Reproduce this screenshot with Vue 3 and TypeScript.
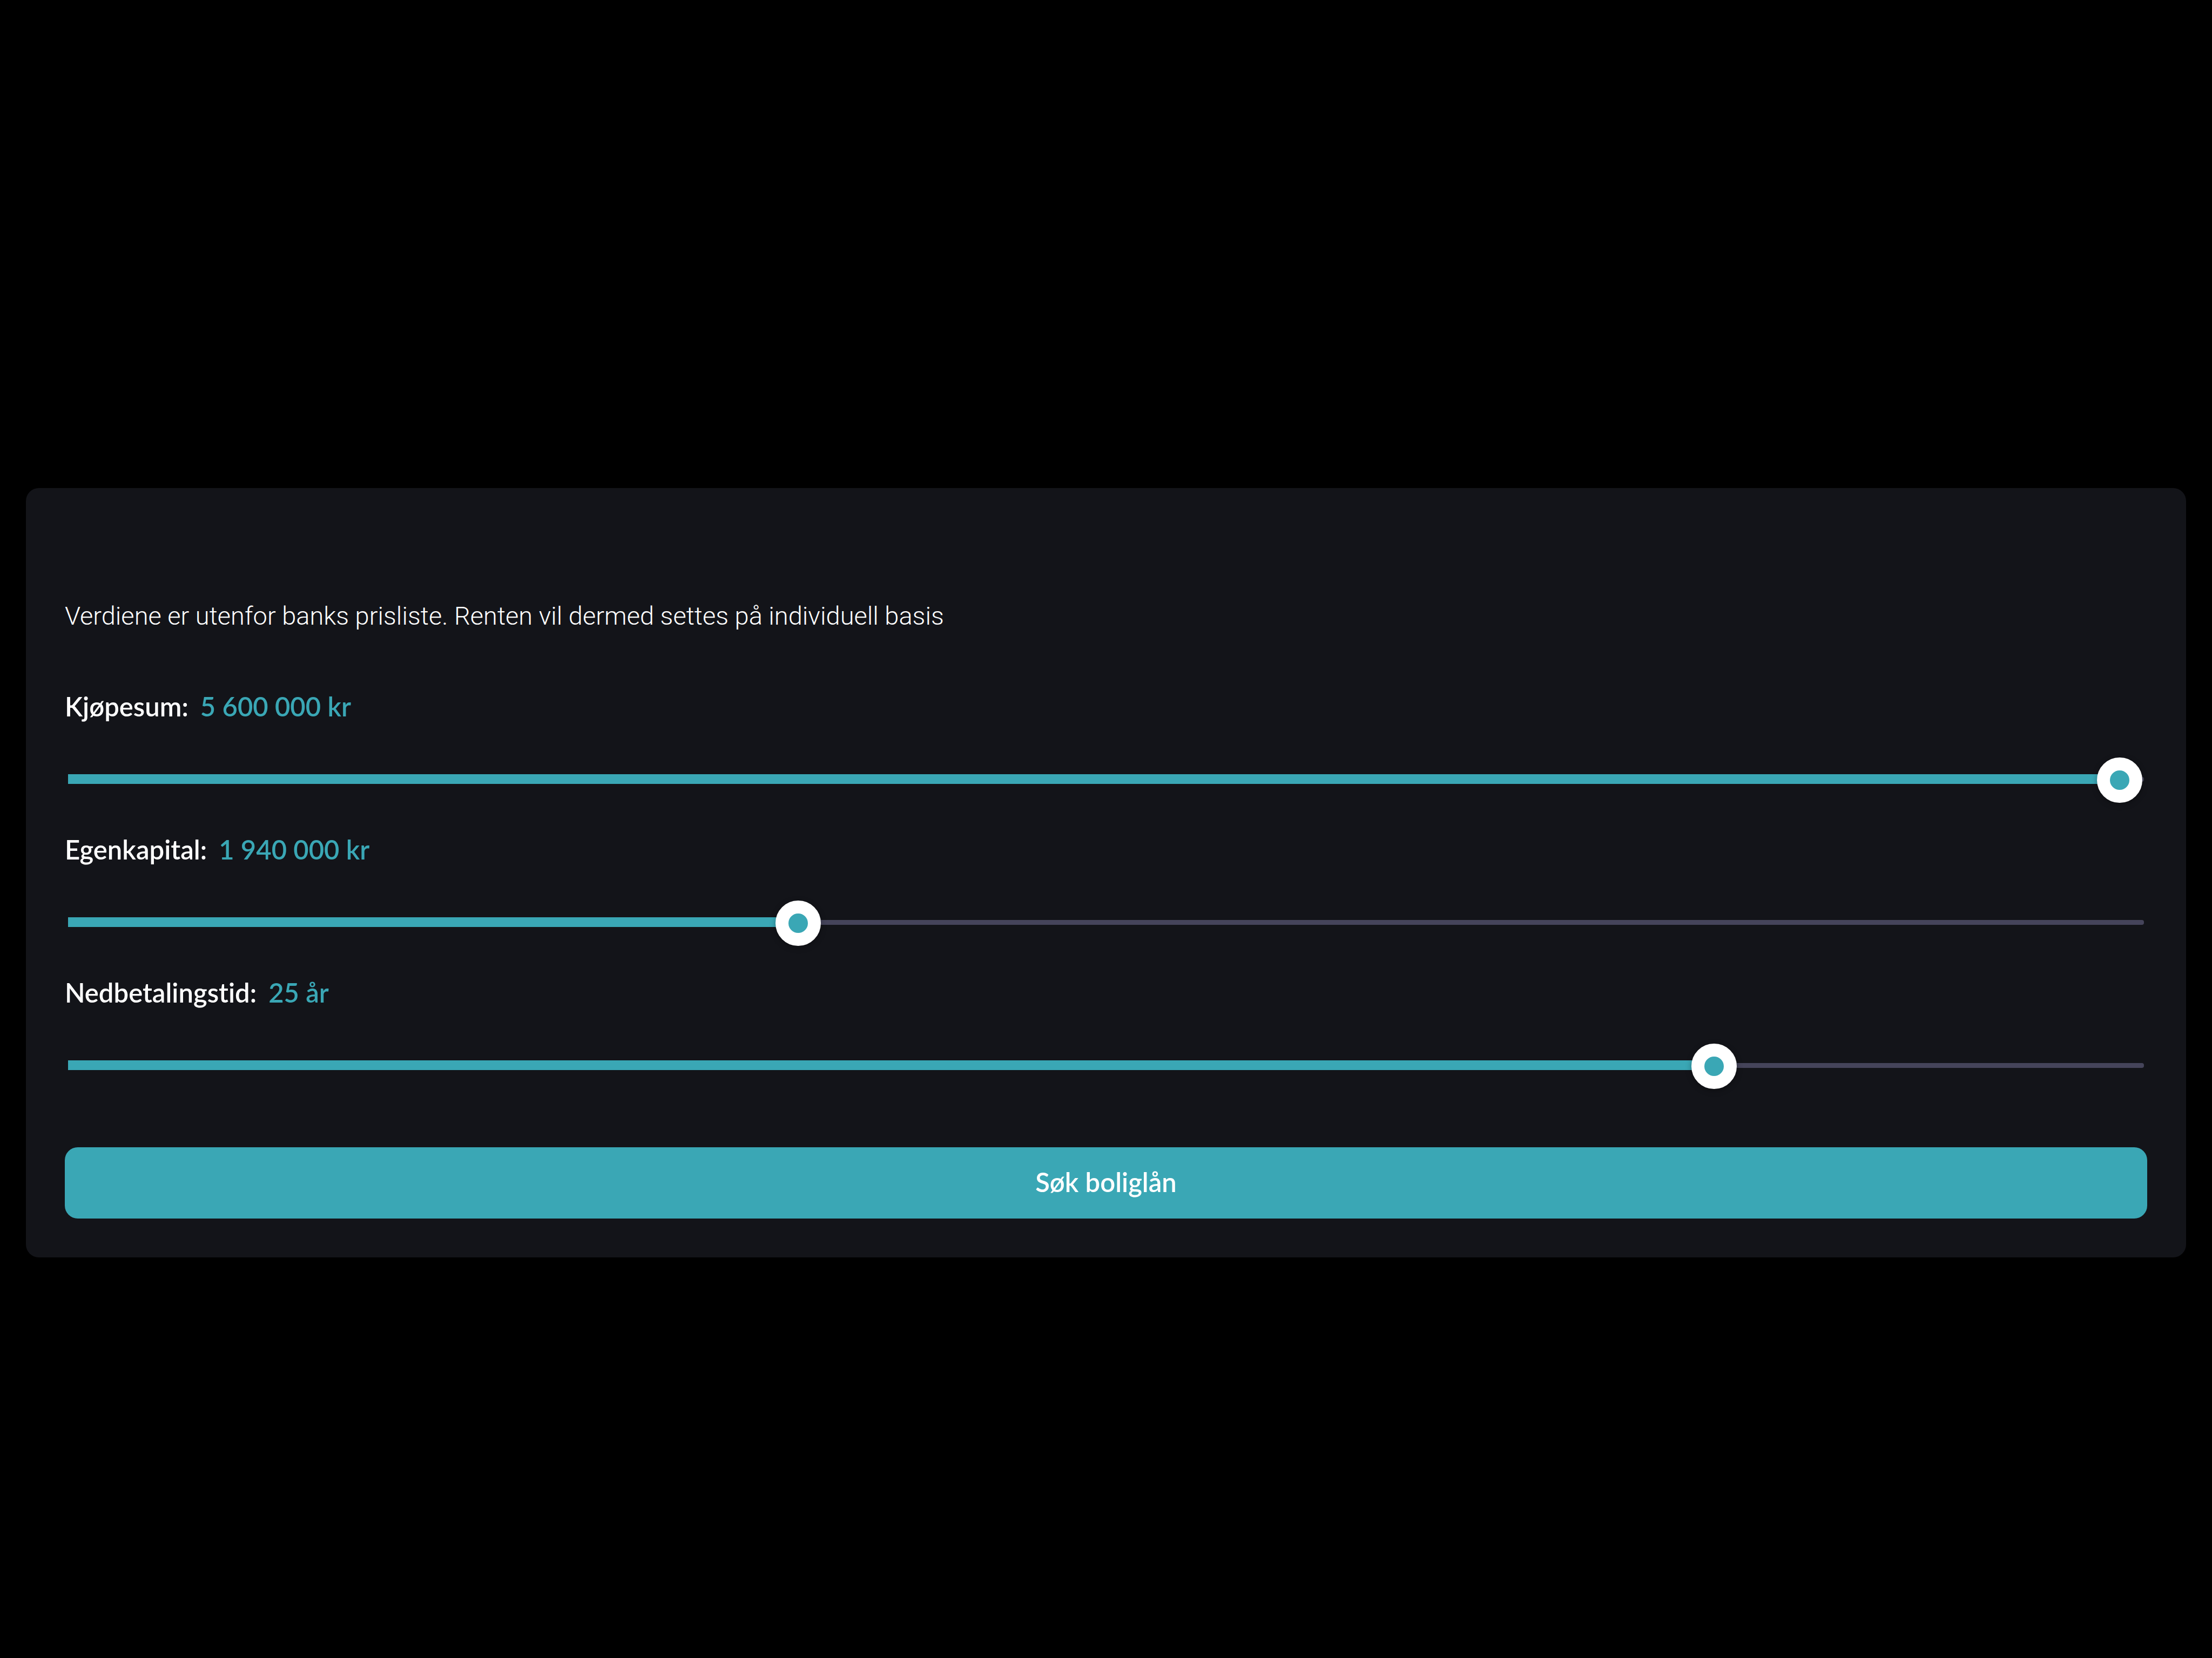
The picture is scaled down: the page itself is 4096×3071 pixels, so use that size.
<script setup lang="ts">
import { computed, reactive } from 'vue'

interface LoanField {
  id: string
  label: string
  unit: string
  min: number
  max: number
  step: number
  value: number
}

const fields = reactive<LoanField[]>([
  { id: 'kjopesum', label: 'Kjøpesum:', unit: 'kr', min: 0, max: 5600000, step: 10000, value: 5600000 },
  { id: 'egenkapital', label: 'Egenkapital:', unit: 'kr', min: 0, max: 5570000, step: 10000, value: 1940000 },
  { id: 'nedbetalingstid', label: 'Nedbetalingstid:', unit: 'år', min: 5, max: 30, step: 1, value: 25 },
])

const rows = computed(() =>
  fields.map((field) => ({
    field,
    text: `${String(field.value).replace(/\B(?=(\d{3})+$)/g, '\u00a0')} ${field.unit}`,
    fill: `${((field.value - field.min) / (field.max - field.min)) * 100}%`,
  })),
)
</script>

<template>
  <main class="page">
    <form class="card" @submit.prevent>
      <p class="notice">Verdiene er utenfor banks prisliste. Renten vil dermed settes på individuell basis</p>

      <div v-for="row in rows" :key="row.field.id" class="field">
        <div class="caption">
          <label :for="row.field.id">{{ row.field.label }}</label>
          <output :for="row.field.id">{{ row.text }}</output>
        </div>
        <div class="slider">
          <span class="rail"></span>
          <span class="progress"><span class="fill" :style="{ width: row.fill }"></span></span>
          <input
            :id="row.field.id"
            v-model.number="row.field.value"
            type="range"
            :min="row.field.min"
            :max="row.field.max"
            :step="row.field.step"
          />
        </div>
      </div>

      <button type="submit" class="submit">Søk boliglån</button>
    </form>
  </main>
</template>

<style>
body {
  margin: 0;
  background: #000;
}
</style>

<style scoped>
.page {
  box-sizing: border-box;
  min-height: 100vh;
  padding: 904px 48px 48px;
  background: #000;
  color: #fff;
  font-family: Lato, 'Open Sans', sans-serif;
  font-size: 49px;
  font-weight: 600;
  font-variant-ligatures: none;
  line-height: 72px;
}

.card {
  display: flex;
  flex-direction: column;
  padding: 201px 72px 72px;
  border-radius: 24px;
  background: #131419;
}

.notice {
  margin: 0 0 95px;
  font-family: Roboto, sans-serif;
  font-size: 47px;
  font-weight: 300;
}

.field {
  display: flex;
  flex-direction: column;
  gap: 59px;
  margin-bottom: 50px;
}

.caption {
  display: flex;
  gap: 22px;
}

.caption output {
  color: #3aa7b5;
}

.slider {
  display: grid;
  height: 84px;
  margin: 0 6px;
}

.slider > * {
  grid-area: 1 / 1;
}

.rail {
  height: 9px;
  margin-top: 36px;
  border-radius: 4px;
  background: #45445a;
}

.progress {
  height: 18px;
  margin: 31px 45px 0 0;
}

.fill {
  display: block;
  height: 100%;
  background: #3aa7b5;
}

input {
  appearance: none;
  height: 84px;
  margin: 0 3px;
  background: transparent;
  cursor: pointer;
}

input::-webkit-slider-thumb {
  appearance: none;
  box-sizing: border-box;
  width: 84px;
  height: 84px;
  border: 24px solid #fff;
  border-radius: 50%;
  background: #3aa7b5;
  box-shadow: 0 3px 12px rgba(0, 0, 0, 0.3);
}

.submit {
  height: 132px;
  margin-top: 58px;
  padding: 0 0 4px;
  border: 0;
  border-radius: 24px;
  background: #3aa7b5;
  color: inherit;
  font: inherit;
  cursor: pointer;
}
</style>
